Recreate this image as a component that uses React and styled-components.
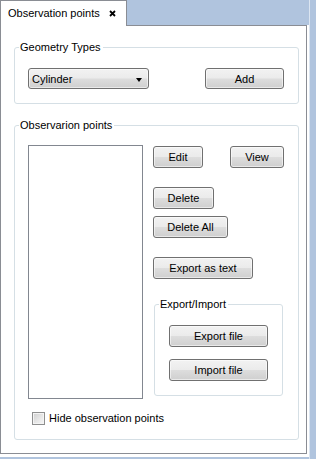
import React from "react";
import styled, { createGlobalStyle } from "styled-components";

const GlobalStyle = createGlobalStyle`
  html, body {
    margin: 0;
    padding: 0;
    background: #b0c4de;
  }
  body {
    font-family: "Liberation Sans", Arial, sans-serif;
    font-size: 11px;
    color: #000;
  }
`;

const Shell = styled.div`
  display: flex;
  width: 316px;
  height: 459px;
  background: #b0c4de;
`;

const Column = styled.div`
  display: flex;
  flex-direction: column;
  width: 309px;
  height: 457px;
`;

const Splitter = styled.div`
  width: 1px;
  background: #dbe5f1;
`;

const TabStrip = styled.div`
  display: flex;
  align-items: flex-end;
  height: 25px;
`;

const Tab = styled.div`
  position: relative;
  z-index: 1;
  display: flex;
  align-items: center;
  justify-content: space-between;
  box-sizing: border-box;
  width: 127px;
  height: 26px;
  margin-bottom: -1px;
  padding: 0 10px 1px 7px;
  background: #fff;
  border: 1px solid #8a8d94;
  border-bottom: none;
  line-height: 13px;
`;

const CloseIcon = () => (
  <svg width="7" height="7" viewBox="0 0 7 7">
    <path d="M1 1L6 6M6 1L1 6" stroke="#000" strokeWidth="1.8" />
  </svg>
);

const PaneFrame = styled.div`
  flex: 1;
  display: flex;
  background: #fff;
  padding: 0 2px 3px 0;
`;

const Pane = styled.div`
  flex: 1;
  display: flex;
  flex-direction: column;
  gap: 15px;
  border: 1px solid #8a8d94;
  padding: 15px 7px 0 13px;
`;

const Group = styled.fieldset`
  margin: 0 ${(p) => p.$mr || 0}px 0 ${(p) => p.$ml || 0}px;
  padding: 0;
  min-width: 0;
  border: 1px solid #d5dfe5;
  border-radius: 3px;
`;

const Legend = styled.legend`
  margin-left: 4px;
  padding: 0 2px 0 1px;
  font-size: 11px;
  line-height: 13px;
`;

const GroupBody = styled.div`
  padding: ${(p) => p.$pad};
`;

const Row = styled.div`
  display: flex;
  align-items: center;
  justify-content: ${(p) => p.$justify || "flex-start"};
`;

const Button = styled.button`
  box-sizing: border-box;
  width: ${(p) => p.$w}px;
  height: ${(p) => p.$h || 22}px;
  margin: ${(p) => p.$m || 0};
  padding: 0;
  font-family: "Liberation Sans", Arial, sans-serif;
  font-size: 11px;
  color: #000;
  border: 1px solid #707070;
  border-radius: 3px;
  background: linear-gradient(#f2f2f2 0%, #ebebeb 48%, #dddddd 52%, #cfcfcf 100%);
  box-shadow: inset 0 0 0 1px rgba(255, 255, 255, 0.55);
  align-self: ${(p) => p.$self || "auto"};
`;

const Combo = styled.div`
  box-sizing: border-box;
  display: flex;
  align-items: center;
  justify-content: space-between;
  width: 121px;
  height: 21px;
  padding: 0 6px 0 3px;
  border: 1px solid #707070;
  border-radius: 3px;
  background: linear-gradient(#f2f2f2 0%, #ebebeb 48%, #dddddd 52%, #cfcfcf 100%);
  box-shadow: inset 0 0 0 1px rgba(255, 255, 255, 0.55);
`;

const Arrow = styled.span`
  width: 0;
  height: 0;
  margin-top: 2px;
  border-left: 3.5px solid transparent;
  border-right: 3.5px solid transparent;
  border-top: 4px solid #000;
`;

const ListArea = styled.div`
  display: grid;
  grid-template-columns: 115px 131px;
  column-gap: 10px;
`;

const ListBox = styled.div`
  box-sizing: border-box;
  height: 254px;
  border: 1px solid #828790;
  background: #fff;
`;

const Actions = styled.div`
  display: flex;
  flex-direction: column;
  align-items: flex-start;
  padding-top: 1px;
`;

const CheckRow = styled.label`
  display: flex;
  align-items: center;
  gap: 4px;
  margin: 13px 0 0 4px;
  line-height: 13px;
`;

const CheckBox = styled.span`
  box-sizing: border-box;
  width: 13px;
  height: 13px;
  border: 1px solid #8e8f8f;
  background: linear-gradient(135deg, #cfcfcf 0%, #e9e9e9 60%, #f6f6f6 100%);
  box-shadow: inset 0 0 0 1px #f4f4f4;
`;

export default function App() {
  return (
    <>
      <GlobalStyle />
      <Shell>
        <Column>
          <TabStrip>
            <Tab>
              <span>Observation points</span>
              <CloseIcon />
            </Tab>
          </TabStrip>
          <PaneFrame>
            <Pane>
              <Group>
                <Legend>Geometry Types</Legend>
                <GroupBody $pad="14px 14px 14px 13px">
                  <Row $justify="space-between">
                    <Combo>
                      <span>Cylinder</span>
                      <Arrow />
                    </Combo>
                    <Button $w={79} $h={21}>Add</Button>
                  </Row>
                </GroupBody>
              </Group>

              <Group>
                <Legend>Observarion points</Legend>
                <GroupBody $pad="13px 14px 14px 13px">
                  <ListArea>
                    <ListBox />
                    <Actions>
                      <Row $justify="space-between" style={{ alignSelf: "stretch" }}>
                        <Button $w={50}>Edit</Button>
                        <Button $w={54}>View</Button>
                      </Row>
                      <Button $w={61} $m="19px 0 0">Delete</Button>
                      <Button $w={75} $m="7px 0 0">Delete All</Button>
                      <Button $w={100} $m="19px 0 0">Export as text</Button>
                      <Group $ml={1} $mr={1} style={{ alignSelf: "stretch", marginTop: 19 }}>
                        <Legend>Export/Import</Legend>
                        <GroupBody $pad="14px 0 14px">
                          <Actions style={{ alignItems: "center", paddingTop: 0 }}>
                            <Button $w={99}>Export file</Button>
                            <Button $w={99} $m="12px 0 0">Import file</Button>
                          </Actions>
                        </GroupBody>
                      </Group>
                    </Actions>
                  </ListArea>
                  <CheckRow>
                    <CheckBox />
                    <span>Hide observation points</span>
                  </CheckRow>
                </GroupBody>
              </Group>
            </Pane>
          </PaneFrame>
        </Column>
        <Splitter />
      </Shell>
    </>
  );
}
